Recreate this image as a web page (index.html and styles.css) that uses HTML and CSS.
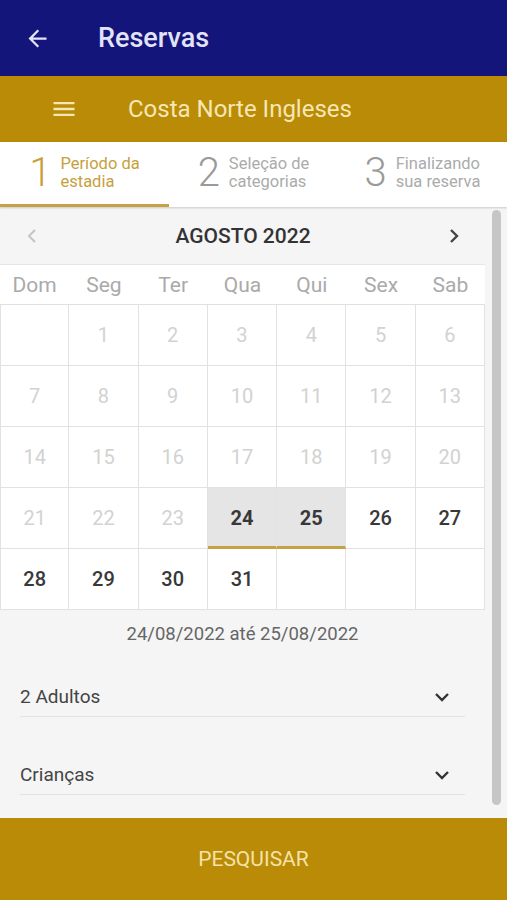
FILE: index.html
```html
<!DOCTYPE html>
<html lang="pt-BR">
<head>
  <meta charset="UTF-8">
  <title>Reservas</title>
  <link rel="stylesheet" href="styles.css">
</head>
<body>

<header class="topbar">
  <svg class="back" width="27" height="27" viewBox="0 0 24 24"><path d="M20 11H7.83l5.59-5.59L12 4l-8 8 8 8 1.41-1.41L7.83 13H20v-2z" fill="#e3e3f7"/></svg>
  <h1>Reservas</h1>
</header>

<div class="hotelbar">
  <svg class="menu" width="28" height="28" viewBox="0 0 24 24"><path d="M3 18h18v-2H3v2zm0-5h18v-2H3v2zm0-7v2h18V6H3z" fill="#f6e7b4"/></svg>
  <span class="hotel">Costa Norte Ingleses</span>
</div>

<nav class="steps">
  <div class="step active">
    <span class="num">1</span>
    <span class="label">Período da<br>estadia</span>
  </div>
  <div class="step">
    <span class="num">2</span>
    <span class="label">Seleção de<br>categorias</span>
  </div>
  <div class="step">
    <span class="num">3</span>
    <span class="label">Finalizando<br>sua reserva</span>
  </div>
</nav>

<div class="content">
  <div class="scroll">
    <div class="cal-head">
      <svg width="14" height="18" viewBox="0 0 14 18"><path d="M10 3L4 9l6 6" fill="none" stroke="#c4c4c4" stroke-width="2"/></svg>
      <span class="month">AGOSTO 2022</span>
      <svg width="14" height="18" viewBox="0 0 14 18"><path d="M4 3l6 6-6 6" fill="none" stroke="#444" stroke-width="2.4"/></svg>
    </div>

    <div class="weekdays">
      <span>Dom</span><span>Seg</span><span>Ter</span><span>Qua</span><span>Qui</span><span>Sex</span><span>Sab</span>
    </div>

    <div class="grid" id="grid"></div>

    <p class="range">24/08/2022 até 25/08/2022</p>

    <div class="field first">
      <span>2 Adultos</span>
      <svg width="18" height="18" viewBox="0 0 18 18"><path d="M3 6l6 6 6-6" fill="none" stroke="#333" stroke-width="2.4"/></svg>
    </div>
    <div class="field">
      <span>Crianças</span>
      <svg width="18" height="18" viewBox="0 0 18 18"><path d="M3 6l6 6 6-6" fill="none" stroke="#333" stroke-width="2.4"/></svg>
    </div>
  </div>
  <div class="track"><div class="thumb"></div></div>
</div>

<button class="search">PESQUISAR</button>

<script>
  // agosto 2022 começa numa segunda
  const grid = document.getElementById('grid');
  const today = 24;
  const selected = [24, 25];
  for (let i = 0; i < 35; i++) {
    const day = i;
    const cell = document.createElement('div');
    cell.className = 'day';
    if (day >= 1 && day <= 31) {
      cell.textContent = day;
      if (day < today) cell.classList.add('off');
      if (selected.includes(day)) cell.classList.add('sel');
    }
    grid.appendChild(cell);
  }
</script>

</body>
</html>
```

FILE: styles.css
```css
* {
  box-sizing: border-box;
}

body {
  margin: 0;
  width: 507px;
  height: 900px;
  overflow: hidden;
  font-family: Roboto, "Liberation Sans", Arial, sans-serif;
  background-color: #f5f5f5;
}

.topbar {
  height: 76px;
  background-color: #14157a;
  display: flex;
  align-items: center;
  padding-left: 24px;
}

.topbar h1 {
  margin: 0 0 0 47px;
  font-size: 27px;
  font-weight: 500;
  color: #e3e3f7;
}

.hotelbar {
  height: 66px;
  background-color: #b98b06;
  display: flex;
  align-items: center;
  padding-left: 50px;
}

.hotel {
  margin-left: 50px;
  font-size: 24px;
  color: #f6e7b4;
}

.steps {
  height: 65px;
  background-color: #ffffff;
  display: flex;
  box-shadow: 0 1px 2px rgba(0, 0, 0, 0.18);
  position: relative;
}

.step {
  flex: 1;
  display: flex;
  align-items: center;
  justify-content: center;
  color: #9a9a9a;
  border-bottom: 3px solid transparent;
}

.step.active {
  color: #c6a03c;
  border-bottom-color: #c6a245;
}

.num {
  font-size: 40px;
  font-weight: 300;
  margin-right: 9px;
  line-height: 1;
}

.label {
  font-size: 16.5px;
  line-height: 18px;
}

.step .label {
  color: #ababab;
}

.step.active .label {
  color: #c6a03c;
}

.content {
  height: 611px;
  display: flex;
}

.scroll {
  width: 485px;
}

.track {
  flex: 1;
  padding: 3px 0 0 7px;
}

.thumb {
  width: 9px;
  height: 595px;
  border-radius: 5px;
  background-color: #c6c6c6;
}

.cal-head {
  height: 58px;
  display: flex;
  align-items: center;
  justify-content: space-between;
  padding: 0 24px 0 25px;
  border-bottom: 1px solid #e6e6e6;
}

.month {
  font-size: 21px;
  font-weight: 500;
  color: #333333;
}

.weekdays {
  height: 40px;
  display: grid;
  grid-template-columns: repeat(7, 1fr);
  align-items: center;
  background-color: #ffffff;
  border-bottom: 1px solid #e0e0e0;
}

.weekdays span {
  text-align: center;
  font-size: 21px;
  color: #aaaaaa;
}

.grid {
  display: grid;
  grid-template-columns: repeat(7, 1fr);
  grid-auto-rows: 61px;
  background-color: #ffffff;
}

.day {
  display: flex;
  align-items: center;
  justify-content: center;
  font-size: 20px;
  font-weight: 500;
  color: #383838;
  border-right: 1px solid #e2e2e2;
  border-bottom: 1px solid #e2e2e2;
}

.day:nth-child(7n+1) {
  border-left: 1px solid #e2e2e2;
}

.day.off {
  color: #d2d2d2;
  font-weight: 400;
}

.day.sel {
  background-color: #e5e5e5;
  font-weight: 700;
  border-bottom: 3px solid #c6a245;
  padding-top: 2px;
}

.range {
  margin: 14px 0 0;
  line-height: 20px;
  text-align: center;
  font-size: 18.5px;
  color: #666666;
}

.field {
  margin: 0 20px;
  padding: 22px 14px 7px 0;
  display: flex;
  align-items: center;
  justify-content: space-between;
  line-height: 24px;
  font-size: 19px;
  color: #444444;
  border-bottom: 1px solid #e2e2e2;
  margin-top: 24px;
}

.field.first {
  margin-top: 19px;
}

.search {
  display: block;
  width: 100%;
  height: 82px;
  border: none;
  background-color: #b98b06;
  color: #f5e2a6;
  font-family: inherit;
  font-size: 21px;
}
```
